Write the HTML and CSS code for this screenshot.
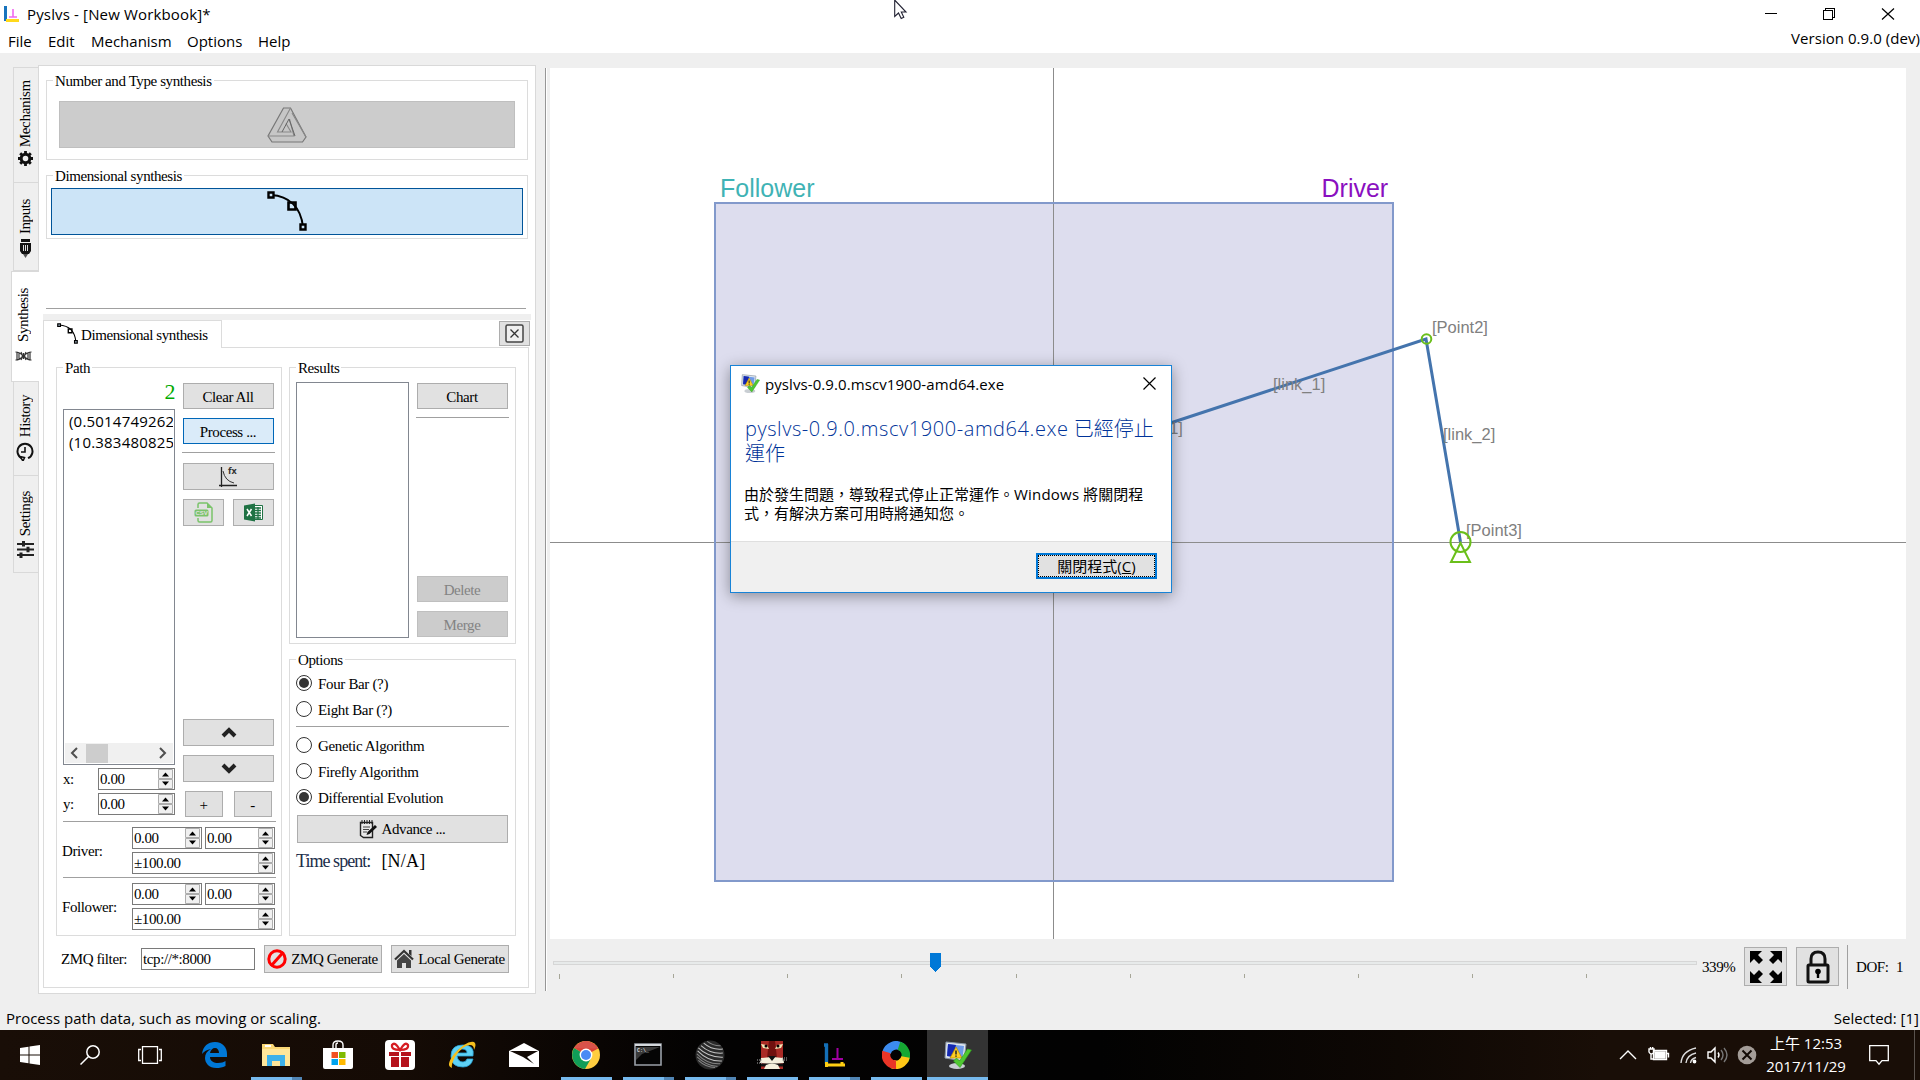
FILE: index.html
```html
<!DOCTYPE html>
<html lang="zh-Hant">
<head>
<meta charset="utf-8">
<title>Pyslvs - [New Workbook]*</title>
<link rel="stylesheet" href="styles.css">
</head>
<body>
<svg class="defs" width="0" height="0">
  <defs>
    <symbol id="curve" viewBox="0 0 40 40">
      <path d="M4 4C22 5 34 16 36 36" fill="none" stroke="#000" stroke-width="2"/>
      <path d="M1.500 1.500h5v5h-5zM33.500 33.500h5v5h-5z" fill="#cce4f7" stroke="#000" stroke-width="2.400"/>
      <path d="M21.500 11.500h7v7h-7z" fill="none" stroke="#000" stroke-width="2.600"/>
    </symbol>
    <symbol id="spin" viewBox="0 0 15 20">
      <path d="M.500.500h14v9H.500zM.500 10.500h14v9H.500z" fill="#f0f0f0" stroke="#adadad"/>
      <path d="M4 7.500h7L7.500 3.500zM4 12.500h7L7.500 16.500z" fill="#000"/>
    </symbol>
    <symbol id="sysfix" viewBox="0 0 28 28">
      <path d="M2 1L22 3L20 20L1 17z" fill="#dfe6ee" stroke="#8b97a5"/>
      <path d="M4 3L20 5L18.500 17L3 15z" fill="#6f9be8"/>
      <path d="M4 3L12 4L9 16L3 15z" fill="#1528b0"/>
      <ellipse cx="13" cy="25" rx="8" ry="3" fill="#c9ced3"/>
      <path d="M12 6L18 17H6z" fill="#ffcf21" stroke="#b98a00" stroke-width=".700"/>
      <path d="M12 9.500v4M12 14.500v1.200" stroke="#222" stroke-width="1.500"/>
      <path d="M9.500 20L16 26.500L27.500 9L23.500 8L15.500 20L12.500 17z" fill="#4fc832" stroke="#2f9c1c" stroke-width=".600"/>
    </symbol>
  </defs>
</svg>

<header class="titlebar">
  <div class="title-row">
    <svg class="app-icon" width="17" height="18" viewBox="0 0 17 18"><path d="M2.500 1v15" stroke="#1874bd" stroke-width="3"/><path d="M3 15.500h13" stroke="#ffd91c" stroke-width="3"/><path d="M10 4v8M6 12h8" stroke="#f06af0" stroke-width="1.600"/></svg>
    <span class="title-text">Pyslvs - [New Workbook]*</span>
    <svg class="caption" width="150" height="16" viewBox="1760 6 150 16" shape-rendering="crispEdges"><path d="M1765 13.500h12M1823.500 10.500h9v9h-9zM1825.500 10v-1.500h9v9h-1.500" fill="none" stroke="#000"/><path d="M1882 8.500l12 11M1894 8.500l-12 11" stroke="#000" stroke-width="1.200" shape-rendering="auto"/></svg>
  </div>
  <nav class="menu-row">
    <span class="m1">File</span><span class="m2">Edit</span><span class="m3">Mechanism</span><span class="m4">Options</span><span class="m5">Help</span>
    <span class="version">Version 0.9.0 (dev)</span>
  </nav>
</header>

<main class="main">
  <div class="side-tabs">
    <div class="side-tab t1"><span>Mechanism</span><svg width="15" height="15" viewBox="0 0 15 15"><circle cx="7.500" cy="7.500" r="4.300" fill="none" stroke="#111" stroke-width="3"/><path d="M7.500 0v3M7.500 12v3M0 7.500h3M12 7.500h3M2.200 2.200l2 2M10.800 10.800l2 2M12.800 2.200l-2 2M4.200 10.800l-2 2" stroke="#111" stroke-width="2.800"/></svg></div>
    <div class="side-tab t2"><span>Inputs</span><svg width="13" height="19" viewBox="0 0 13 19"><path d="M2 0h9v3H2zM1 4h11v8l-2 3H3l-2-3z" fill="#111"/><path d="M4.500 6v6M6.500 6v6M8.500 6v6" stroke="#ddd"/><path d="M4 15h5l-2.500 4z" fill="#555"/></svg></div>
    <div class="side-tab t3 active"><span>Synthesis</span><svg width="17" height="10" viewBox="0 0 17 10"><path d="M.500 1q4 0 8 4t8 4M.500 9q4 0 8-4t8-4M2 1v8M4 2v6M8.500 2v6M13 2v6M15 1v8M6 1q2.500 4 0 8M11 1q-2.500 4 0 8" fill="none" stroke="#333" stroke-width="1.200"/></svg></div>
    <div class="side-tab t4"><span>History</span><svg width="18" height="19" viewBox="0 0 18 19"><path d="M12 16.200A7.500 7.500 0 1 0 6 16.200" fill="none" stroke="#111" stroke-width="2"/><path d="M9 5v5H5M4 14.500l4.500 1-1.500 3.500z" fill="none" stroke="#111" stroke-width="1.600"/></svg></div>
    <div class="side-tab t5"><span>Settings</span><svg width="17" height="17" viewBox="0 0 17 17"><path d="M0 3h17M0 8.500h17M0 14h17" stroke="#222" stroke-width="2.200"/><path d="M6.500 0v5.500M11 5.800v5.500M4 11.500v5.500" stroke="#222" stroke-width="3"/></svg></div>
  </div>

  <section class="panel">
    <div class="group g-number">
      <h3>Number and Type synthesis</h3>
      <button class="btn disabled big"><svg width="40" height="36" viewBox="0 0 40 36"><path d="M16.500 1h7L39 30l-3.500 5H5L1 29z" fill="#c6c6c6" stroke="#777" stroke-width="1.200"/><path d="M23.500 1L10.500 25H24L19 16.500M1 29h26L22.500 12M39 30L25 6" fill="none" stroke="#888" stroke-width="1.100"/><path d="M22 12L15 25M22 12l6 17" fill="none" stroke="#666"/></svg></button>
    </div>
    <div class="group g-dim">
      <h3>Dimensional synthesis</h3>
      <button class="btn pressed"><svg width="40" height="40"><use href="#curve"/></svg></button>
    </div>
    <div class="rule r-top"></div>
    <div class="band"></div>

    <div class="tab-row">
      <div class="tab"><svg width="21" height="21"><use href="#curve"/></svg><span>Dimensional synthesis</span></div>
      <button class="btn close"><svg width="19" height="19" viewBox="0 0 19 19"><rect x="1" y="1" width="17" height="17" rx="1.500" fill="#efefef" stroke="#444" stroke-width="1.500"/><path d="M5.500 5.500l8 8M13.500 5.500l-8 8" stroke="#333" stroke-width="1.300"/></svg></button>
    </div>

    <div class="page">
      <div class="columns">
        <div class="group g-path">
          <h3>Path</h3>
          <div class="path-top">
            <div class="path-left">
              <div class="count">2</div>
              <div class="list">
                <p>(0.5014749262</p><p>(10.383480825</p>
                <div class="hscroll"><svg width="9" height="12" viewBox="0 0 9 12"><path d="M7 1L2 6l5 5" fill="none" stroke="#505050" stroke-width="2"/></svg><i></i><svg class="right" width="9" height="12" viewBox="0 0 9 12"><path d="M2 1l5 5-5 5" fill="none" stroke="#505050" stroke-width="2"/></svg></div>
              </div>
              <div class="xy"><label>x:</label><div class="spin">0.00<svg><use href="#spin"/></svg></div></div>
              <div class="xy"><label>y:</label><div class="spin">0.00<svg><use href="#spin"/></svg></div></div>
            </div>
            <div class="path-right">
              <button class="btn label">Clear All</button>
              <button class="btn label focus">Process ...</button>
              <div class="rule"></div>
              <button class="btn h27"><svg width="20" height="21" viewBox="0 0 20 21"><path d="M2.500 1v20M0 19.500h18" stroke="#222" stroke-width="1.300" fill="none"/><path d="M4 5q2 10 11 12" stroke="#333" fill="none"/><text x="9" y="8" class="fx">fx</text></svg></button>
              <div class="pair w41">
                <button class="btn h27"><svg width="19" height="21" viewBox="0 0 19 21"><path d="M4 6V2.500Q4 1 5.500 1H13l5 5v12.500q0 1.500-1.500 1.500h-11Q4 20 4 18.500V16" fill="none" stroke="#7ac36a" stroke-width="1.500"/><path d="M13 1v5h5z" fill="#7ac36a"/><rect x=".500" y="7.500" width="14" height="7" rx="1.500" fill="#7ac36a"/><text x="1.500" y="13.200" class="csv">CSV</text></svg></button>
                <button class="btn h27"><svg width="19" height="19" viewBox="0 0 19 19"><path d="M9 2.500h9.500v14H9z" fill="#fff" stroke="#1f7244"/><path d="M11 5h6M11 7.500h6M11 10h6M11 12.500h6M11 15h6M14 4v12" stroke="#1f7244" stroke-width="1.300"/><path d="M0 2.500L11 .500v18L0 16.500z" fill="#1f7244"/><path d="M3 6l4.500 7M7.500 6L3 13" stroke="#fff" stroke-width="1.500"/></svg></button>
              </div>
              <button class="btn h27 push"><svg width="16" height="11" viewBox="0 0 16 11"><path d="M2 9l6-6 6 6" fill="none" stroke="#222" stroke-width="4"/></svg></button>
              <button class="btn h27"><svg width="16" height="11" viewBox="0 0 16 11"><path d="M2 2l6 6 6-6" fill="none" stroke="#222" stroke-width="4"/></svg></button>
              <div class="pair w38"><button class="btn label">+</button><button class="btn label">-</button></div>
            </div>
          </div>
          <div class="rule r-a"></div>
          <div class="range"><label>Driver:</label><div class="range-grid"><div class="spin">0.00<svg><use href="#spin"/></svg></div><div class="spin">0.00<svg><use href="#spin"/></svg></div><div class="spin wide">±100.00<svg><use href="#spin"/></svg></div></div></div>
          <div class="rule r-b"></div>
          <div class="range"><label>Follower:</label><div class="range-grid"><div class="spin">0.00<svg><use href="#spin"/></svg></div><div class="spin">0.00<svg><use href="#spin"/></svg></div><div class="spin wide">±100.00<svg><use href="#spin"/></svg></div></div></div>
        </div>

        <div class="col-right">
          <div class="group g-results">
            <h3>Results</h3>
            <div class="results">
              <div class="result-list"></div>
              <div class="result-actions">
                <button class="btn label">Chart</button>
                <div class="rule"></div>
                <button class="btn label disabled push">Delete</button>
                <button class="btn label disabled">Merge</button>
              </div>
            </div>
          </div>
          <div class="group g-options">
            <h3>Options</h3>
            <div class="radio on"><i></i>Four Bar (?)</div>
            <div class="radio"><i></i>Eight Bar (?)</div>
            <div class="rule"></div>
            <div class="radio"><i></i>Genetic Algorithm</div>
            <div class="radio"><i></i>Firefly Algorithm</div>
            <div class="radio on"><i></i>Differential Evolution</div>
            <button class="btn advance"><svg width="18" height="19" viewBox="0 0 18 19"><path d="M1.500 2.500h12v15h-9l-3-2z" fill="#e8e8e8" stroke="#222" stroke-width="1.400"/><path d="M3 0v4M5.500 0v4M8 0v4M10.500 0v4M13 0v4" stroke="#222"/><path d="M4 7h7M4 9.500h6M4 12h4" stroke="#444"/><path d="M7.500 15l1-3L16 5l2 2-7.500 7z" fill="#111"/></svg>Advance ...</button>
            <div class="time"><span class="t-label">Time spent:</span><span class="t-value">[N/A]</span></div>
          </div>
        </div>
      </div>
      <div class="actions">
        <label>ZMQ filter:</label>
        <div class="field">tcp://*:8000</div>
        <button class="btn zmq"><svg width="20" height="20" viewBox="0 0 20 20"><circle cx="10" cy="10" r="8.200" fill="none" stroke="#f00" stroke-width="3"/><path d="M4 17L16.500 3" stroke="#f00" stroke-width="3"/></svg>ZMQ Generate</button>
        <button class="btn local"><svg width="20" height="20" viewBox="0 0 20 20"><path d="M1 10.500L10 2l9 8.500" fill="none" stroke="#333" stroke-width="2.200"/><path d="M15 1h2.500v6L15 5z" fill="#333"/><path d="M3 11.500L10 5l7 6.500V19h-5v-5H8v5H3z" fill="#444"/></svg>Local Generate</button>
      </div>
    </div>
  </section>

  <div class="splitter"></div>

  <section class="stage">
    <svg class="canvas" width="1356" height="871" viewBox="550 68 1356 871">
      <rect x="715" y="203" width="678" height="678" fill="#ddddee"/>
      <path d="M1053.500 68v871M550 542.500h1356" stroke="#8c8c8c"/>
      <rect x="715" y="203" width="678" height="678" fill="none" stroke="#8299cb" stroke-width="2"/>
      <text class="big-label" x="720" y="196.500" fill="#3fb3b5">Follower</text>
      <text class="big-label" x="1321.500" y="196.500" fill="#8a0fc0">Driver</text>
      <path d="M1140 433L1426 339L1460.500 542" fill="none" stroke="#4474ad" stroke-width="3"/>
      <text class="small-label" x="1432" y="333">[Point2]</text>
      <text class="small-label" x="1273" y="390">[link_1]</text>
      <text class="small-label" x="1443" y="440">[link_2]</text>
      <text class="small-label" x="1466" y="536">[Point3]</text>
      <text class="small-label" x="1127" y="434">[Point1]</text>
      <g fill="none" stroke="#6abf1a" stroke-width="2"><circle cx="1426.500" cy="339" r="4.800"/><circle cx="1460.500" cy="542" r="10"/><path d="M1460.500 543L1451 562h19z"/></g>
    </svg>
    <div class="view-bar">
      <svg class="slider" width="1146" height="30" viewBox="552 951 1146 30" shape-rendering="crispEdges">
        <rect x="553.500" y="960.500" width="1143" height="3" fill="#e7eaea" stroke="#d6d6d6"/>
        <path d="M559.500 973v5M673.500 973v4M787.500 973v4M901.500 973v4M1016.500 973v4M1130.500 973v4M1244.500 973v4M1358.500 973v4M1472.500 973v4M1586.500 973v4" stroke="#a6a698"/>
        <path d="M930 952h11v13l-5.500 6-5.500-6z" fill="#0078d7"/>
      </svg>
      <span class="zoom">339%</span>
      <button class="btn sq"><svg width="32" height="32" viewBox="0 0 32 32"><g id="arr"><path d="M0 0h12L8 4l5 5-4 4-5-5-4 4z"/></g><use href="#arr" transform="matrix(-1 0 0 1 32 0)"/><use href="#arr" transform="matrix(1 0 0 -1 0 32)"/><use href="#arr" transform="matrix(-1 0 0 -1 32 32)"/></svg></button>
      <button class="btn sq"><svg width="24" height="34" viewBox="0 0 24 34"><rect x="2" y="15" width="20" height="17" rx="1" fill="none" stroke="#111" stroke-width="3"/><path d="M5 15V9q0-7 7-7t7 7v6" fill="none" stroke="#111" stroke-width="3"/><circle cx="12" cy="21.500" r="2.800"/><path d="M10.800 22h2.400v6h-2.400z"/></svg></button>
      <i class="vsep"></i>
      <span class="dof">DOF:</span><span class="dof-n">1</span>
    </div>
  </section>
</main>

<footer class="status"><span class="msg">Process path data, such as moving or scaling.</span><span>Selected: [1]</span></footer>

<div class="taskbar">
  <div class="sys"><svg width="20" height="20" viewBox="0 0 20 20" fill="#fff"><path d="M0 3l8.500-1.200v7.700H0zM9.500 1.600L20 0v9.500H9.500zM0 10.500h8.500v7.700L0 17zM9.500 10.500H20V20L9.500 18.400z"/></svg></div>
  <div class="sys"><svg width="20" height="20" viewBox="0 0 20 20" fill="none" stroke="#fff" stroke-width="1.500"><circle cx="13" cy="7" r="6.200"/><path d="M8.500 11.500L.500 19.500"/></svg></div>
  <div class="sys"><svg width="24" height="18" viewBox="0 0 24 18" fill="none" stroke="#fff" stroke-width="1.300"><path d="M4.500 .700h15v16.600h-15zM3 3.500H.700v11H3M21 3.500h2.300v11H21"/></svg></div>
  <div class="app first"><svg width="25" height="26" viewBox="0 0 25 26"><path d="M0 12C1 4 6 0 13 0c8 0 12 6 12 12v3H8c0 4 4 6 8 6 3 0 6-1 7.500-2v5c-3 1.500-6 2-9 2C7 26 3 21 3 16c0-4 2-7 6-9C5 7.500 2 9.500 0 12zm8-1h9c0-3-1.500-5-4-5s-4.500 2-5 5z" fill="#0078d7"/></svg></div>
  <div class="app run multi"><svg width="28" height="24" viewBox="0 0 28 24"><path d="M0 1h11l2 3h15v19H0z" fill="#f9d775"/><path d="M0 6h28v17H0z" fill="#ffe69a"/><path d="M3 2h6v2H3z" fill="#fff"/><path d="M5 23V12h18v11h-5v-5h-8v5z" fill="#3db1ea"/></svg></div>
  <div class="app"><svg width="30" height="29" viewBox="0 0 30 29"><path d="M10 9V5q0-4 5-4t5 4v4M13 9V5q0-2 2-2" fill="none" stroke="#fff" stroke-width="1.400"/><path d="M0 8h30v19q0 2-2 2H2q-2 0-2-2z" fill="#fff"/><path d="M8.500 12H15v6H8.500z" fill="#f25022"/><path d="M16 12h6.500v6H16z" fill="#7fba00"/><path d="M8.500 19H15v6H8.500z" fill="#00a4ef"/><path d="M16 19h6.500v6H16z" fill="#ffb900"/></svg></div>
  <div class="app"><svg width="30" height="30" viewBox="0 0 30 30"><rect width="30" height="30" rx="4" fill="#fff"/><path d="M4 12h10v4H4zM16 12h10v4H16zM6 17h8v10H6zM16 17h8v10h-8z" fill="#b5121b"/><path d="M15 10Q6 10 7 5q3-4 8 5 5-9 8-5 1 5-8 5z" fill="none" stroke="#d61c22" stroke-width="2.200"/></svg></div>
  <div class="app"><svg width="30" height="30" viewBox="0 0 30 30"><path d="M26 16H10q1 6 6 6 3 0 4-3h6q-2 8-10 8Q4 27 4 16T16 5t10 11zM10 13h10q0-4-5-4t-5 4z" fill="#5fd2f5" stroke="#2aa6dc" stroke-width=".800"/><path d="M5 28Q-2 26 7 14 20 0 27 2q3 2 0 8 0-5-4-5-7 0-15 12-4 8-3 11z" fill="#f5bf1d"/></svg></div>
  <div class="app"><svg width="30" height="24" viewBox="0 0 30 24"><path d="M0 8L15 0l15 8v16H0z" fill="#fff"/><path d="M1 8h28L18 14l7 7-11-7z" fill="#120a05"/></svg></div>
  <div class="app run"><svg width="28" height="28" viewBox="0 0 28 28"><circle cx="14" cy="14" r="14" fill="#ffcd40"/><path d="M14 14L2 7A14 14 0 0 1 26.200 7.500z" fill="#db4437"/><path d="M2 7A14 14 0 0 0 13 28l6-10.500L14 14z" fill="#109d58"/><path d="M2 7Q8 0 14 0t12.200 7.500H14z" fill="#d9534a"/><circle cx="14" cy="14" r="6.400" fill="#fff"/><circle cx="14" cy="14" r="5" fill="#4a8af4"/></svg></div>
  <div class="app run multi"><svg width="28" height="23" viewBox="0 0 28 23"><path d="M1 1h26v21H1z" fill="#050505" stroke="#9aa0a8" stroke-width="1.600"/><path d="M1 2h26" stroke="#d4d8dc" stroke-width="2"/><path d="M2 4h24L8 11l-6 6z" fill="#3a3a3a"/><text x="3" y="9" class="cmd">C:\_</text></svg></div>
  <div class="app run multi"><svg width="30" height="30" viewBox="0 0 30 30"><circle cx="15" cy="15" r="14.500" fill="#2a2a2a"/><g fill="none" stroke="#c4c4c4" stroke-width="1" transform="rotate(14 15 15)"><path d="M6 5q10 5 20 1M4 8q11 6 23 2M2 11q12 7 26 3M2 14q13 8 26 4"/><path d="M2 17q13 8 25 4M3 20q12 7 22 4M5 23q9 5 18 3M9 2.500q7 3 14 1" stroke="#858585"/></g></svg></div>
  <div class="app run"><svg width="30" height="28" viewBox="0 0 30 28"><path d="M4 0h22v28H4z" fill="#a92a25"/><path d="M12 0h6l2 17H10z" fill="#70100e"/><path d="M4 3l6 1 2 4-6-1zM26 3l-6 1-2 4 6-1z" fill="#f2e6b5"/><circle cx="9" cy="5" r="1.500"/><circle cx="21" cy="5" r="1.500"/><path d="M4 17l10-1h2l10 1 1 5-8 1h-8l-8-1z" fill="#f4f0dc"/><path d="M11 15h8l-4 5zM4 22.500h22v3H4z" fill="#111"/><path d="M9 24q6-3 12 0l2 4H7z" fill="#f4f0dc"/><path d="M0 19h5M0 22h5M25 19h5M25 17h5" stroke="#aaa" stroke-dasharray="1 1"/></svg></div>
  <div class="app run multi"><svg width="23" height="26" viewBox="0 0 23 26"><path d="M1 3h4M3.500 2v20" stroke="#1470b8" stroke-width="3.400"/><path d="M3 23h19M3.500 20v5M19 20v4" stroke="#ffcf12" stroke-width="3"/><path d="M14.500 6v11M9 17h11" stroke="#a100a1" stroke-width="2"/></svg></div>
  <div class="app run"><svg width="28" height="28" viewBox="0 0 28 28" fill="none" stroke-width="8.500"><path d="M4.500 12A9.800 9.800 0 0 1 20 6.300" stroke="#3c8bee"/><path d="M17 4.700A9.800 9.800 0 0 1 22.500 19" stroke="#15a832"/><path d="M23.500 16A9.800 9.800 0 0 1 10 23" stroke="#ffc716"/><path d="M14 23.800A9.800 9.800 0 0 1 4.500 11" stroke="#ea3527"/></svg></div>
  <div class="app run current"><svg width="28" height="28"><use href="#sysfix"/></svg></div>
  <div class="tray">
    <svg width="122" height="24" viewBox="1618 1043 122 24" fill="none" stroke="#fff" stroke-width="1.400"><path d="M1620 1059l8-8 8 8"/><path d="M1653.500 1050.500h13v9h-13zM1667 1053.500h1.500v4"/><path d="M1655 1052h10v6h-10z" fill="#fff"/><path d="M1649 1049h5v3q-1 2-2.500 2t-2.500-2zM1650.500 1047v2M1652.700 1047v2M1651 1054v5h3"/><path d="M1681 1063q1-12 15-15M1686 1063q1-8 10-10M1690.500 1063q.500-4 5.500-5.500" stroke="#ddd"/><circle cx="1694.500" cy="1061.500" r="1.200" fill="#fff"/><path d="M1708 1052h3l4-4v14l-4-4h-3z"/><path d="M1718 1052.500q2 2.500 0 5"/><path d="M1721 1050q4 5 0 10M1724 1048q6 7 0 14" stroke="#777"/></svg>
    <svg class="x" width="20" height="20" viewBox="0 0 20 20"><circle cx="10" cy="10" r="9.300" fill="#a39c97"/><path d="M5.500 5.500l9 9M14.500 5.500l-9 9" stroke="#120a05" stroke-width="2"/></svg>
    <div class="clock"><span>上午 12:53</span><span>2017/11/29</span></div>
    <svg class="note" width="20" height="21" viewBox="0 0 20 21"><path d="M.700.700h18.600v15H13l-3 3.500-3-3.500H.700z" fill="none" stroke="#fff" stroke-width="1.300"/></svg>
    <i class="peek"></i>
  </div>
</div>

<div class="dialog">
  <div class="d-title"><svg width="19" height="19"><use href="#sysfix"/></svg><span>pyslvs-0.9.0.mscv1900-amd64.exe</span><svg class="d-x" width="13" height="13" viewBox="0 0 13 13"><path d="M.500.500l12 12M12.500.500l-12 12" stroke="#000" stroke-width="1.200"/></svg></div>
  <div class="d-head"><span class="hl">pyslvs-0.9.0.mscv1900-amd64.exe</span> 已經停止<br>運作</div>
  <div class="d-body">由於發生問題，導致程式停止正常運作。<span class="win">Windows</span> 將關閉程<br>式，有解決方案可用時將通知您。</div>
  <div class="d-foot"><button class="d-btn"><span>關閉程式(<u>C</u>)</span></button></div>
</div>
<svg class="cursor" width="14" height="20" viewBox="0 0 14 20"><path d="M.700 0v16.500l3.800-3.500 2.700 5.500 2.600-1.200L7.300 12H12z" fill="#fff" stroke="#223" stroke-width="1.100"/></svg>
</body>
</html>
```
FILE: styles.css
```css
* { box-sizing: border-box; }
body {
  margin: 0; width: 1920px; height: 1080px; overflow: hidden; position: relative;
  display: flex; flex-direction: column; background: #efefef; color: #000;
  font: 15px/18px "Liberation Serif", serif; letter-spacing: -.4px;
}
.defs { position: absolute; }
svg { display: block; flex: none; }
h3, p { margin: 0; font-weight: normal; font-size: inherit; }
button { font: inherit; letter-spacing: inherit; color: inherit; padding: 0; margin: 0; }

.titlebar, .status, .list, .dialog, .clock { font-family: "Open Sans", "Noto Sans CJK TC", sans-serif; letter-spacing: 0; }
.titlebar { height: 53px; background: #fff; font-size: 15px; flex: none; }
.title-row { height: 28px; display: flex; align-items: center; padding: 0 10px 0 3px; }
.title-text { margin-left: 7px; letter-spacing: .15px; }
.caption { margin-left: auto; }
.menu-row { height: 25px; display: flex; align-items: center; padding-left: 8px; }
.m1 { width: 40px; } .m2 { width: 43px; } .m3 { width: 96px; } .m4 { width: 71px; }
.version { margin-left: auto; margin-top: -6px; letter-spacing: .05px; }

.main { height: 952px; display: flex; flex: none; }
.side-tabs { width: 38px; padding-top: 14px; display: flex; flex-direction: column; align-items: flex-end; flex: none; }
.side-tab { width: 25px; border: 1px solid #d9d9d9; border-right: 0; border-top: 0; display: flex; flex-direction: column; align-items: center; background: #efefef; }
.side-tab span { writing-mode: vertical-rl; transform: rotate(180deg); line-height: 18px; }
.side-tab svg { margin-top: auto; }
.t1 { height: 116px; padding: 12px 2px 16px 0; border-top: 1px solid #d9d9d9; }
.t1 span { letter-spacing: -.3px; }
.t2 { height: 88px; padding: 16px 2px 12px 0; }
.side-tab.active { width: 28px; height: 111px; margin-right: -1px; padding: 16px 5px 20px 0; background: #fff; border-top: 1px solid #d9d9d9; z-index: 1; }
.t4 { height: 94px; padding: 13px 2px 14px 0; }
.t5 { height: 97px; padding: 15px 2px 14px 0; }

.panel { width: 498px; height: 929px; margin-top: 12px; border: 1px solid #d9d9d9; background: #fff; padding: 14px 0 0 4px; flex: none; display: flex; flex-direction: column; }
.group { border: 1px solid #dcdcdc; display: flex; flex-direction: column; align-items: flex-start; }
.group h3 { margin: -9px 0 0 6px; padding: 0 2px; height: 16px; line-height: 18px; background: #fff; }
.btn { background: #e1e1e1; border: 1px solid #adadad; height: 26px; display: flex; align-items: center; justify-content: center; border-radius: 0; }
.btn.label { padding: 2px 1px 0 0; }
.btn.disabled { background: #ccc; border-color: #bfbfbf; color: #838383; }
.rule { height: 1px; background: #a0a0a0; flex: none; }
.g-number { width: 482px; height: 80px; margin-left: 3px; }
.big { width: 456px; height: 47px; margin: 13px 0 0 12px; }
.g-dim { width: 482px; height: 64px; margin: 15px 0 0 3px; }
.group .pressed { width: 472px; height: 47px; margin: 5px 0 0 4px; padding-bottom: 2px; background: #cce4f7; border-color: #005499; }
.r-top { width: 480px; margin: 69px 0 0 3px; }
.band { width: 488px; height: 6px; margin-top: 5px; background: #efefef; flex: none; }
.tab-row { display: flex; height: 27px; width: 488px; flex: none; }
.tab { width: 179px; height: 28px; border: 1px solid #dcdcdc; border-bottom: 0; background: #fff; display: flex; align-items: center; padding: 0 0 2px 13px; z-index: 1; }
.tab span { margin-left: 3px; padding-top: 2px; letter-spacing: -.42px; white-space: nowrap; }
.close { width: 31px; height: 25px; margin: 1px 1px 0 auto; }
.page { width: 486px; height: 641px; border: 1px solid #dcdcdc; flex: none; padding: 19px 0 0 12px; }
.columns { display: flex; gap: 7px; }
.g-path { width: 226px; height: 569px; }
.path-top { display: flex; gap: 8px; padding-left: 6px; height: 442px; }
.path-left { width: 112px; display: flex; flex-direction: column; }
.count { height: 34px; text-align: right; color: #00aa00; font-size: 22px; line-height: 34px; }
.list { height: 356px; border: 1px solid #828790; padding: 1px 1px 1px; overflow: hidden; display: flex; flex-direction: column; font-size: 15px; }
.list p { height: 21px; line-height: 20px; padding-left: 4px; white-space: nowrap; overflow: hidden; letter-spacing: .2px; }
.hscroll { height: 20px; margin-top: auto; background: #f0f0f0; display: flex; align-items: center; padding: 0 6px 0 5px; }
.hscroll i { width: 22px; height: 19px; margin-left: 7px; background: #cdcdcd; }
.hscroll .right { margin-left: auto; }
.xy { margin-top: 3px; display: flex; justify-content: space-between; align-items: center; }
.spin { width: 70px; height: 22px; border: 1px solid #7a7a7a; background: #fff; display: flex; align-items: center; justify-content: space-between; padding: 0 1px 0 1px; }
.xy .spin { width: 77px; }
.spin svg { width: 15px; height: 20px; }
.path-right { width: 91px; display: flex; flex-direction: column; gap: 9px; padding-top: 8px; }
.path-right .rule { width: 93px; margin: -1px 0 1px -1px; }
.focus { background: #daebf9; border-color: #0067b8; }
.h27 { height: 27px; }
.pair { display: flex; justify-content: space-between; }
.w41 .btn { width: 41px; }
.w38 { padding: 0 2px 0 2px; } .w38 .btn { width: 38px; }
.push { margin-top: auto; }
.fx { font: bold 9px "Open Sans", sans-serif; letter-spacing: 0; fill: #333; }
.csv { font: bold 6px "Liberation Sans", sans-serif; letter-spacing: 0; fill: #e1e1e1; }
.cmd { font: bold 5px "Liberation Mono", monospace; letter-spacing: 0; fill: #ddd; }
.r-a { width: 213px; margin: 4px 0 5px 6px; }
.r-b { width: 213px; margin: 3px 0 5px 6px; }
.range { display: flex; align-items: center; padding-left: 5px; }
.range label { width: 70px; }
.range-grid { width: 143px; display: flex; flex-wrap: wrap; gap: 3px; }
.wide { width: 143px; }

.col-right { width: 227px; display: flex; flex-direction: column; gap: 15px; }
.g-results, .g-options { height: 277px; }
.results { display: flex; gap: 8px; padding: 7px 0 0 6px; }
.result-list { width: 113px; height: 256px; border: 1px solid #828790; }
.result-actions { width: 91px; height: 256px; display: flex; flex-direction: column; gap: 9px; padding: 1px 0; }
.result-actions .rule { margin: -1px 0 0 -1px; width: 93px; }
.g-options > :not(h3) { margin-left: 6px; }
.radio { height: 26px; display: flex; align-items: center; letter-spacing: -.34px; }
.g-options h3 + .radio { margin-top: 4px; }
.radio i { width: 16px; height: 16px; border: 1.3px solid #333; border-radius: 50%; margin: -2px 6px 0 0; display: flex; }
.radio.on i::before { content: ""; width: 10px; height: 10px; margin: auto; border-radius: 50%; background: #333; }
.g-options .rule { width: 213px; margin-top: 3px; margin-bottom: 6px; }
.g-options .advance { width: 211px; height: 28px; margin: 4px 0 0 7px; padding-right: 1px; gap: 5px; }
.time { margin-top: 8px; display: flex; gap: 11px; font-size: 18px; line-height: 20px; }
.t-label { color: #1c2e4a; letter-spacing: -.95px; }
.t-value { letter-spacing: .2px; }
.actions { display: flex; align-items: center; margin-top: 9px; height: 27px; padding-left: 5px; }
.actions .btn { height: 28px; width: 118px; gap: 4px; white-space: nowrap; padding-right: 1px; }
.field { width: 114px; height: 22px; margin: 0 9px 0 0; border: 1px solid #7a7a7a; padding-left: 1px; line-height: 20px; }
.actions label { width: 80px; white-space: nowrap; }
.actions .local { margin-left: 9px; }

.splitter { width: 2px; height: 923px; margin: 15px 3px 0 9px; border-left: 1px solid #969696; background: #fff; flex: none; }
.stage { width: 1370px; padding-top: 15px; }
.canvas { background: #fff; letter-spacing: 0; }
.big-label { font: 25px "Liberation Sans", sans-serif; }
.small-label { font: 16.500px "Liberation Sans", sans-serif; fill: #808080; }
.view-bar { display: flex; align-items: center; height: 55px; padding-left: 2px; }
.zoom { width: 46px; padding-left: 4px; }
.sq { width: 43px; height: 39px; margin-right: 9px; }
.sq + .sq { margin-right: 8px; }
.vsep { width: 1px; height: 44px; background: #a0a0a0; }
.dof { margin-left: 8px; width: 40px; }
.status { height: 25px; flex: none; display: flex; justify-content: space-between; align-items: center; padding: 0 1px 0 6px; font-size: 15px; }

.taskbar { height: 50px; flex: none; display: flex; background: linear-gradient(90deg, #190e07 0, #150b05 400px, #030202 700px, #020202 1100px, #0e0804 1400px, #190e07 1600px); letter-spacing: 0; }
.sys, .app { height: 50px; display: flex; align-items: center; justify-content: center; flex: none; }
.sys { width: 60px; }
.app { width: 62px; }
.first { margin-left: 3px; }
.app svg { margin-top: -1px; }
.run { background: linear-gradient(#76b9ed, #76b9ed) 6px 47px / 51px 3px no-repeat; }
.multi { background: linear-gradient(#5185b4, #5185b4) 47px 47px / 10px 3px no-repeat, linear-gradient(#76b9ed, #76b9ed) 6px 47px / 41px 3px no-repeat; }
.current { width: 61px; background: linear-gradient(#76b9ed, #76b9ed) 0 47px / 61px 3px no-repeat, #333; }
.tray { margin-left: auto; display: flex; align-items: center; color: #fff; }
.tray .x { margin-left: -3px; }
.clock { width: 86px; margin-left: 6px; font-size: 15px; line-height: 23px; display: flex; flex-direction: column; align-items: center; white-space: nowrap; }
.note { margin: 0 25px 0 20px; }
.peek { width: 6px; height: 50px; border-left: 1px solid #5a534e; }

.dialog { position: absolute; left: 730px; top: 365px; width: 442px; height: 228px; background: #fff; border: 1px solid #1883d7; box-shadow: 0 3px 14px rgba(0,0,0,.38); display: flex; flex-direction: column; }
.d-title { height: 35px; display: flex; align-items: center; padding: 0 15px 0 10px; font-size: 15px; letter-spacing: .08px; }
.d-title span { margin-left: 5px; }
.d-x { margin-left: auto; }
.d-head { height: 69px; margin-top: 15px; padding-left: 14px; color: #003399; font-size: 20px; line-height: 25px; white-space: nowrap; font-weight: 300; }
.hl { letter-spacing: .57px; }
.d-body { padding-left: 13px; font-size: 15px; line-height: 19px; white-space: nowrap; }
.win { letter-spacing: .2px; }
.d-foot { margin-top: auto; height: 51px; background: #f0f0f0; border-top: 1px solid #dfdfdf; display: flex; justify-content: flex-end; padding: 11px 14px 0; }
.d-btn { width: 121px; height: 26px; background: #e1e1e1; border: 2px solid #0078d7; padding: 0; }
.d-btn span { display: block; height: 22px; line-height: 20px; border: 1px dotted #000; }
.cursor { position: absolute; left: 894px; top: 0; }
```
